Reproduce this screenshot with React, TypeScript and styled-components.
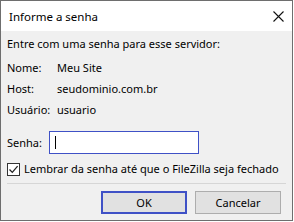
import React from 'react';
import styled, { createGlobalStyle } from 'styled-components';

const GlobalStyle = createGlobalStyle`
  html, body {
    margin: 0;
    padding: 0;
    background: #ffffff;
  }
  body {
    font-family: 'Noto Sans', 'Liberation Sans', sans-serif;
    font-size: 11px;
    color: #000000;
  }
`;

const info = [
  { label: 'Nome:', value: 'Meu Site' },
  { label: 'Host:', value: 'seudominio.com.br' },
  { label: 'Usuário:', value: 'usuario' },
];

function CloseIcon() {
  return (
    <svg width="11" height="11" viewBox="0 0 11 11">
      <path d="M0.5 0.5 L10.5 10.5 M10.5 0.5 L0.5 10.5" stroke="#111" strokeWidth="1.1" fill="none" />
    </svg>
  );
}

function CheckIcon() {
  return (
    <svg width="11" height="11" viewBox="0 0 11 11">
      <path d="M1.5 5.5 L4.3 8.4 L9.6 2.2" stroke="#222" strokeWidth="1.3" fill="none" />
    </svg>
  );
}

function App() {
  return (
    <>
      <GlobalStyle />
      <Styled.Window>
        <Styled.TitleBar>
          <Styled.Title>Informe a senha</Styled.Title>
          <Styled.CloseButton>
            <CloseIcon />
          </Styled.CloseButton>
        </Styled.TitleBar>
        <Styled.Body>
          <Styled.Intro>Entre com uma senha para esse servidor:</Styled.Intro>
          <Styled.InfoGrid>
            {info.map((row) => (
              <React.Fragment key={row.label}>
                <Styled.InfoLabel>{row.label}</Styled.InfoLabel>
                <Styled.InfoValue>{row.value}</Styled.InfoValue>
              </React.Fragment>
            ))}
          </Styled.InfoGrid>
          <Styled.PasswordRow>
            <Styled.PasswordLabel>Senha:</Styled.PasswordLabel>
            <Styled.PasswordField>
              <Styled.Caret />
            </Styled.PasswordField>
          </Styled.PasswordRow>
          <Styled.CheckRow>
            <Styled.CheckBox>
              <CheckIcon />
            </Styled.CheckBox>
            <Styled.CheckLabel>Lembrar da senha até que o FileZilla seja fechado</Styled.CheckLabel>
          </Styled.CheckRow>
          <Styled.Separator />
          <Styled.ButtonRow>
            <Styled.Button isDefault>OK</Styled.Button>
            <Styled.Button>Cancelar</Styled.Button>
          </Styled.ButtonRow>
        </Styled.Body>
      </Styled.Window>
    </>
  );
}

export default App;

const Styled = {
  Window: styled.div`
    box-sizing: border-box;
    width: 293px;
    height: 221px;
    border: 1px solid #6e6e6e;
    display: flex;
    flex-direction: column;
    background: #f0f0f0;
  `,
  TitleBar: styled.div`
    height: 30px;
    flex: none;
    background: #ffffff;
    display: flex;
    align-items: center;
    justify-content: space-between;
    padding: 0 8px 0 8px;
  `,
  Title: styled.span`
    font-size: 11.5px;
    line-height: 16px;
    margin-top: 1px;
  `,
  CloseButton: styled.div`
    display: flex;
    align-items: center;
  `,
  Body: styled.div`
    flex: 1;
    display: flex;
    flex-direction: column;
    padding: 5px 11px 0 6px;
  `,
  Intro: styled.div`
    line-height: 16px;
  `,
  InfoGrid: styled.div`
    display: grid;
    grid-template-columns: 50px 1fr;
    grid-auto-rows: 21px;
    align-items: center;
    margin-top: 5px;
  `,
  InfoLabel: styled.span`
    white-space: nowrap;
  `,
  InfoValue: styled.span`
    white-space: nowrap;
  `,
  PasswordRow: styled.div`
    display: flex;
    align-items: center;
    margin-top: 11px;
  `,
  PasswordLabel: styled.span`
    width: 42px;
  `,
  PasswordField: styled.div`
    box-sizing: border-box;
    width: 150px;
    height: 23px;
    background: #ffffff;
    border: 1px solid #3f51c6;
    display: flex;
    align-items: center;
    padding-left: 5px;
  `,
  Caret: styled.span`
    width: 1px;
    height: 13px;
    background: #000000;
  `,
  CheckRow: styled.div`
    display: flex;
    align-items: center;
    gap: 4px;
    margin-top: 7px;
    line-height: 16px;
  `,
  CheckBox: styled.div`
    box-sizing: border-box;
    width: 13px;
    height: 13px;
    border: 1px solid #333333;
    background: #ffffff;
    display: flex;
    align-items: center;
    justify-content: center;
  `,
  CheckLabel: styled.span`
    white-space: nowrap;
  `,
  Separator: styled.div`
    height: 1px;
    background: #d6d6d6;
    margin: 6px -5px 0 0;
  `,
  ButtonRow: styled.div`
    display: flex;
    justify-content: flex-end;
    gap: 8px;
    margin-top: 7px;
  `,
  Button: styled.div<{ isDefault?: boolean }>`
    box-sizing: border-box;
    width: 86px;
    height: 23px;
    display: flex;
    align-items: center;
    justify-content: center;
    background: #e1e1e1;
    border: ${({ isDefault }) => (isDefault ? '2px solid #3f51c6' : '1px solid #adadad')};
  `,
};
